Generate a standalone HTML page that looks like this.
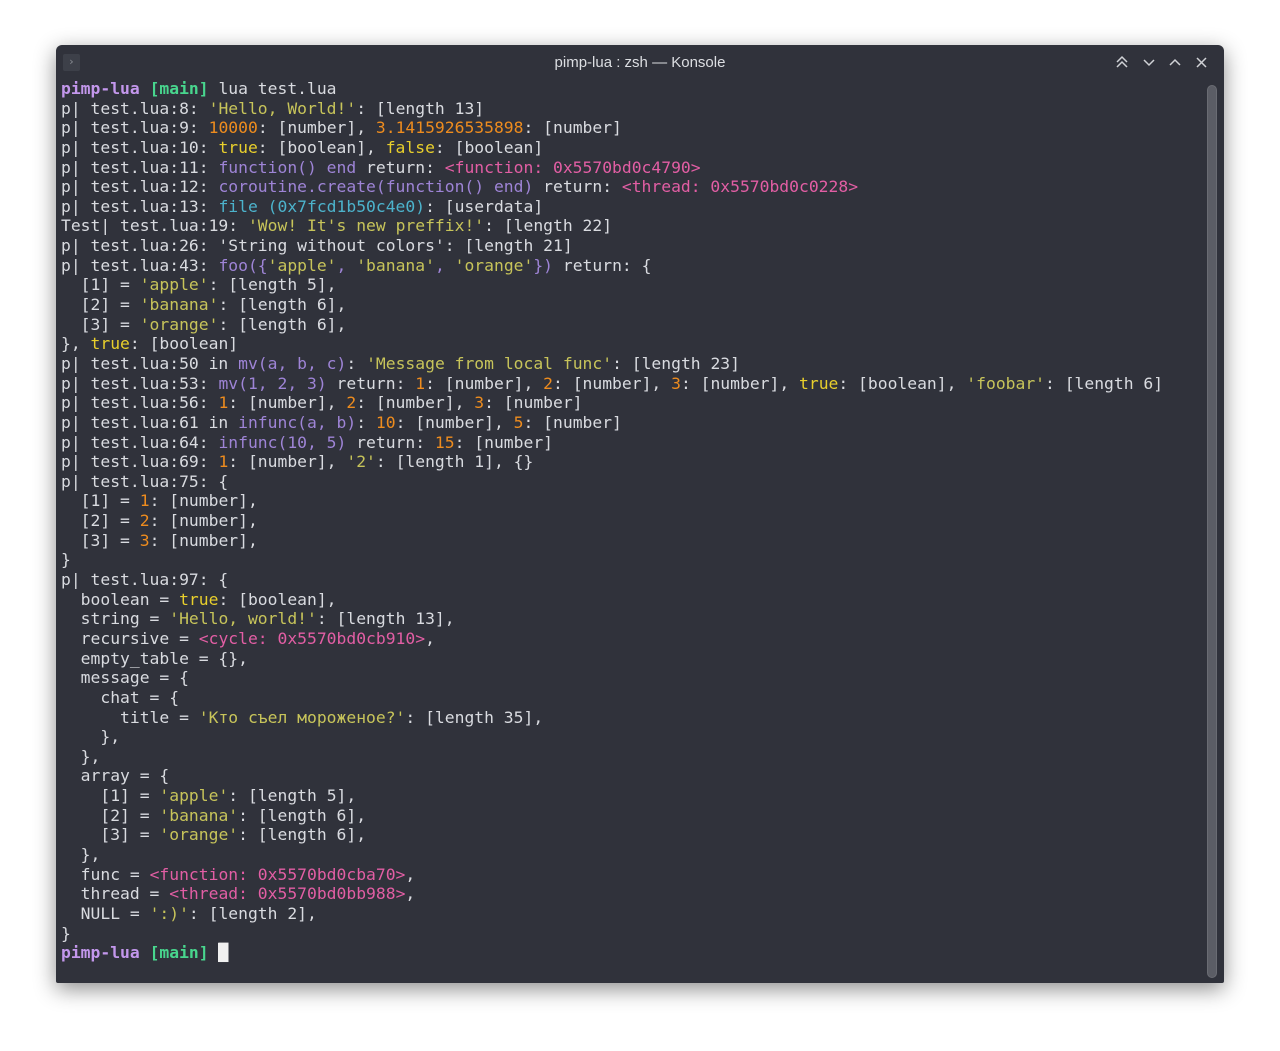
<!DOCTYPE html>
<html><head><meta charset="utf-8"><style>
body{margin:0;width:1280px;height:1051px;background:#fff;overflow:hidden;position:relative}
.win{position:absolute;left:56px;top:45px;width:1168px;height:938px;background:#30323b;border-radius:6px 6px 2px 2px;box-shadow:0 6px 22px rgba(0,0,0,.45)}
.title{position:absolute;left:0;top:8px;width:100%;height:19px;text-align:center;line-height:19px;font-size:15px;font-family:"Liberation Sans","DejaVu Sans",sans-serif;color:#dcdee2}
.menu{position:absolute;left:7px;top:9px;width:17px;height:17px;background:#3d4049;border-radius:2px;color:#8a8d94;font:11px "DejaVu Sans",sans-serif;line-height:16px;text-align:center}
.btns{position:absolute;right:8px;top:10px}
.scroll{position:absolute;left:1151px;top:40px;width:10px;height:893px;background:#5b5d65;border-radius:5px;border:1px solid #6a6c73;box-sizing:border-box}
pre{position:absolute;left:5px;top:34px;margin:0;font:16.35px/19.64px "DejaVu Sans Mono","Liberation Mono",monospace;color:#d9dbe0;white-space:pre}
.pp{color:#c397ec;font-weight:bold}.g{color:#48d68e;font-weight:bold}
.s{color:#c7c45a}.n{color:#ee8c1e}.b{color:#e8cf2c}.f{color:#9e84d6}.k{color:#e25ea4}.c{color:#4cb3cc}
.cur{background:#f0f0f0;color:#f0f0f0}
</style></head><body>
<div class="win">
<div class="title">pimp-lua : zsh — Konsole</div>
<div class="menu">›</div>
<svg class="btns" width="100" height="16" viewBox="0 0 100 16" fill="none" stroke="#d0d2d6" stroke-width="1.5">
<path d="M1 7l5-5 5 5M1 12l5-5 5 5"/><path d="M28 5l5 5 5-5"/><path d="M54 10l5-5 5 5"/><path d="M81 3l9 9M90 3l-9 9"/>
</svg>
<div class="scroll"></div>
<pre><span class="pp">pimp-lua</span> <span class="g">[main]</span> lua test.lua
p| test.lua:8: <span class="s">'Hello, World!'</span>: [length 13]
p| test.lua:9: <span class="n">10000</span>: [number], <span class="n">3.1415926535898</span>: [number]
p| test.lua:10: <span class="b">true</span>: [boolean], <span class="b">false</span>: [boolean]
p| test.lua:11: <span class="f">function() end</span> return: <span class="k">&lt;function: 0x5570bd0c4790&gt;</span>
p| test.lua:12: <span class="f">coroutine.create(function() end)</span> return: <span class="k">&lt;thread: 0x5570bd0c0228&gt;</span>
p| test.lua:13: <span class="c">file (0x7fcd1b50c4e0)</span>: [userdata]
Test| test.lua:19: <span class="s">'Wow! It's new preffix!'</span>: [length 22]
p| test.lua:26: 'String without colors': [length 21]
p| test.lua:43: <span class="f">foo({</span><span class="s">'apple'</span><span class="f">, </span><span class="s">'banana'</span><span class="f">, </span><span class="s">'orange'</span><span class="f">})</span> return: {
  [1] = <span class="s">'apple'</span>: [length 5],
  [2] = <span class="s">'banana'</span>: [length 6],
  [3] = <span class="s">'orange'</span>: [length 6],
}, <span class="b">true</span>: [boolean]
p| test.lua:50 in <span class="f">mv(a, b, c)</span>: <span class="s">'Message from local func'</span>: [length 23]
p| test.lua:53: <span class="f">mv(1, 2, 3)</span> return: <span class="n">1</span>: [number], <span class="n">2</span>: [number], <span class="n">3</span>: [number], <span class="b">true</span>: [boolean], <span class="s">'foobar'</span>: [length 6]
p| test.lua:56: <span class="n">1</span>: [number], <span class="n">2</span>: [number], <span class="n">3</span>: [number]
p| test.lua:61 in <span class="f">infunc(a, b)</span>: <span class="n">10</span>: [number], <span class="n">5</span>: [number]
p| test.lua:64: <span class="f">infunc(10, 5)</span> return: <span class="n">15</span>: [number]
p| test.lua:69: <span class="n">1</span>: [number], <span class="s">'2'</span>: [length 1], {}
p| test.lua:75: {
  [1] = <span class="n">1</span>: [number],
  [2] = <span class="n">2</span>: [number],
  [3] = <span class="n">3</span>: [number],
}
p| test.lua:97: {
  boolean = <span class="b">true</span>: [boolean],
  string = <span class="s">'Hello, world!'</span>: [length 13],
  recursive = <span class="k">&lt;cycle: 0x5570bd0cb910&gt;</span>,
  empty_table = {},
  message = {
    chat = {
      title = <span class="s">'Кто съел мороженое?'</span>: [length 35],
    },
  },
  array = {
    [1] = <span class="s">'apple'</span>: [length 5],
    [2] = <span class="s">'banana'</span>: [length 6],
    [3] = <span class="s">'orange'</span>: [length 6],
  },
  func = <span class="k">&lt;function: 0x5570bd0cba70&gt;</span>,
  thread = <span class="k">&lt;thread: 0x5570bd0bb988&gt;</span>,
  NULL = <span class="s">':)'</span>: [length 2],
}
<span class="pp">pimp-lua</span> <span class="g">[main]</span> <span class="cur">█</span></pre>
</div>
</body></html>
